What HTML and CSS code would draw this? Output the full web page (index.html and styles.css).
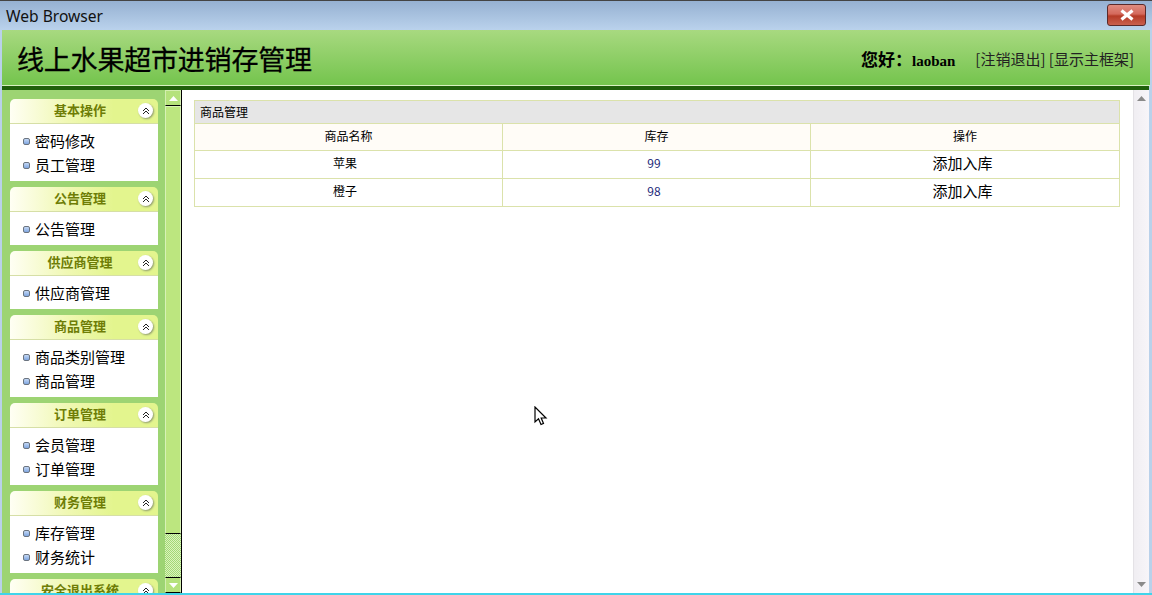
FILE: index.html
```html
<!DOCTYPE html>
<html lang="zh-CN">
<head>
    <meta charset="UTF-8">
    <meta name="viewport" content="width=device-width, initial-scale=1.0">
    <title>Web Browser</title>
    <link rel="stylesheet" href="styles.css">
</head>
<body>
    <div class="window">
        <div class="titlebar">
            <span class="titlebar-text">Web Browser</span>
            <div class="close-btn">
                <svg width="16" height="12" viewBox="0 0 16 12"><path d="M2.5 1.5 L13.5 10.5 M13.5 1.5 L2.5 10.5" stroke="#fff" stroke-width="3.2" fill="none"/></svg>
            </div>
        </div>

        <div class="top">
            <h1 class="site-title">线上水果超市进销存管理</h1>
            <div class="user-info">
                <b class="hello">您好：<span class="user-name">laoban</span></b>
                <span class="top-links"><a>[注销退出]</a> <a>[显示主框架]</a></span>
            </div>
        </div>

        <div class="main">
            <div class="sidebar">
                <div class="panel">
                    <div class="panel-head"><span>基本操作</span>
                        <i class="toggle"><svg width="8" height="8" viewBox="0 0 8 8"><path d="M1 4 L4 1 L7 4 M1 7 L4 4 L7 7" stroke="#222" fill="none"/></svg></i>
                    </div>
                    <ul class="panel-body">
                        <li>密码修改</li>
                        <li>员工管理</li>
                    </ul>
                </div>
                <div class="panel">
                    <div class="panel-head"><span>公告管理</span>
                        <i class="toggle"><svg width="8" height="8" viewBox="0 0 8 8"><path d="M1 4 L4 1 L7 4 M1 7 L4 4 L7 7" stroke="#222" fill="none"/></svg></i>
                    </div>
                    <ul class="panel-body">
                        <li>公告管理</li>
                    </ul>
                </div>
                <div class="panel">
                    <div class="panel-head"><span>供应商管理</span>
                        <i class="toggle"><svg width="8" height="8" viewBox="0 0 8 8"><path d="M1 4 L4 1 L7 4 M1 7 L4 4 L7 7" stroke="#222" fill="none"/></svg></i>
                    </div>
                    <ul class="panel-body">
                        <li>供应商管理</li>
                    </ul>
                </div>
                <div class="panel">
                    <div class="panel-head"><span>商品管理</span>
                        <i class="toggle"><svg width="8" height="8" viewBox="0 0 8 8"><path d="M1 4 L4 1 L7 4 M1 7 L4 4 L7 7" stroke="#222" fill="none"/></svg></i>
                    </div>
                    <ul class="panel-body">
                        <li>商品类别管理</li>
                        <li>商品管理</li>
                    </ul>
                </div>
                <div class="panel">
                    <div class="panel-head"><span>订单管理</span>
                        <i class="toggle"><svg width="8" height="8" viewBox="0 0 8 8"><path d="M1 4 L4 1 L7 4 M1 7 L4 4 L7 7" stroke="#222" fill="none"/></svg></i>
                    </div>
                    <ul class="panel-body">
                        <li>会员管理</li>
                        <li>订单管理</li>
                    </ul>
                </div>
                <div class="panel">
                    <div class="panel-head"><span>财务管理</span>
                        <i class="toggle"><svg width="8" height="8" viewBox="0 0 8 8"><path d="M1 4 L4 1 L7 4 M1 7 L4 4 L7 7" stroke="#222" fill="none"/></svg></i>
                    </div>
                    <ul class="panel-body">
                        <li>库存管理</li>
                        <li>财务统计</li>
                    </ul>
                </div>
                <div class="panel">
                    <div class="panel-head"><span>安全退出系统</span>
                        <i class="toggle"><svg width="8" height="8" viewBox="0 0 8 8"><path d="M1 4 L4 1 L7 4 M1 7 L4 4 L7 7" stroke="#222" fill="none"/></svg></i>
                    </div>
                </div>
            </div>

            <div class="side-scroll">
                <div class="side-btn"><svg width="9" height="5" viewBox="0 0 9 5"><path d="M4.5 0 L9 5 L0 5 Z" fill="#fff"/></svg></div>
                <div class="side-thumb"></div>
                <svg class="side-track" shape-rendering="crispEdges">
                    <defs>
                        <pattern id="dither" width="2" height="2" patternUnits="userSpaceOnUse">
                            <rect width="2" height="2" fill="#a2d877"/>
                            <rect width="1" height="1" fill="#dcf4bd"/>
                            <rect x="1" y="1" width="1" height="1" fill="#dcf4bd"/>
                        </pattern>
                    </defs>
                    <rect width="100%" height="100%" fill="url(#dither)"/>
                </svg>
                <div class="side-btn side-btn-down"><svg width="9" height="5" viewBox="0 0 9 5"><path d="M0 0 L9 0 L4.5 5 Z" fill="#fff"/></svg></div>
            </div>

            <div class="content">
                <table class="goods">
                    <colgroup>
                        <col class="col-name">
                        <col class="col-stock">
                        <col class="col-action">
                    </colgroup>
                    <tr class="goods-title"><td colspan="3">商品管理</td></tr>
                    <tr class="goods-head">
                        <td>商品名称</td>
                        <td>库存</td>
                        <td>操作</td>
                    </tr>
                    <tr>
                        <td class="name">苹果</td>
                        <td class="num">99</td>
                        <td class="action">添加入库</td>
                    </tr>
                    <tr>
                        <td class="name">橙子</td>
                        <td class="num">98</td>
                        <td class="action">添加入库</td>
                    </tr>
                </table>
            </div>

            <div class="main-scroll">
                <svg width="9" height="5" viewBox="0 0 9 5"><path d="M4.5 0 L9 5 L0 5 Z" fill="#8a8a8a"/></svg>
                <svg width="9" height="5" viewBox="0 0 9 5"><path d="M0 0 L9 0 L4.5 5 Z" fill="#8a8a8a"/></svg>
            </div>
        </div>

        <svg class="pointer" width="14" height="21" viewBox="0 0 14 21"><path d="M1 1 L1 16 L4.5 12.8 L7 18.5 L9.5 17.4 L7.2 12 L12 12 Z" fill="#fff" stroke="#000" stroke-width="1.2"/></svg>
    </div>
</body>
</html>
```

FILE: styles.css
```css
html, body {
    margin: 0;
    padding: 0;
    height: 100%;
    overflow: hidden;
}
body {
    background: #fff;
    font-family: "Noto Sans CJK SC", "Liberation Sans", sans-serif;
    color: #000;
}
.window {
    position: relative;
    box-sizing: border-box;
    width: 1152px;
    height: 595px;
    display: flex;
    flex-direction: column;
    padding: 0 2px 0 2px;
    background: #b9d1ea;
    border-top: 1px solid #444;
    border-bottom: 2px solid #3fd4ea;
    overflow: hidden;
}

/* window title bar */
.titlebar {
    height: 29px;
    flex: none;
    margin: 0 -2px;
    padding: 0 6px 0 6px;
    display: flex;
    justify-content: space-between;
    align-items: center;
    background: linear-gradient(#96b1d2, #bad2ec);
}
.titlebar-text {
    font-family: "Noto Sans", sans-serif;
    font-size: 15.6px;
    color: #111;
}
.close-btn {
    width: 39px;
    height: 22px;
    margin-top: -1px;
    box-sizing: border-box;
    display: flex;
    align-items: center;
    justify-content: center;
    border: 1px solid #5b2a2a;
    border-radius: 3px;
    background: linear-gradient(#df8d80 0%, #d4695c 45%, #b53b27 55%, #c9604e 100%);
}

/* green header */
.top {
    height: 56px;
    flex: none;
    box-sizing: border-box;
    display: flex;
    justify-content: space-between;
    align-items: center;
    padding: 2px 16px 0 15px;
    background: linear-gradient(#a8d980, #74c44d);
    border-bottom: 1px solid #d6efc0;
}
.site-title {
    margin: 0;
    font-size: 27px;
    font-weight: 400;
    letter-spacing: -0.2px;
    line-height: 52px;
    -webkit-text-stroke: 0.3px #000;
}
.user-info {
    display: flex;
    align-items: center;
    gap: 20px;
}
.hello {
    font-size: 17px;
}
.user-name {
    font-family: "Liberation Serif", serif;
    font-size: 15px;
}
.top-links {
    font-size: 15px;
    color: #222;
}

.main {
    flex: 1;
    min-height: 0;
    display: flex;
    border-top: 4px solid #1f5f0b;
    margin-right: 1px;
}

/* left menu */
.sidebar {
    width: 163px;
    flex: none;
    box-sizing: border-box;
    padding: 9px 7px 0 8px;
    background: #9dd473;
    overflow: hidden;
}
.panel {
    margin-bottom: 6px;
}
.panel-head {
    position: relative;
    height: 25px;
    box-sizing: border-box;
    padding-right: 8px;
    text-align: center;
    font-size: 13px;
    font-weight: 700;
    line-height: 21px;
    color: #6e7d06;
    background: linear-gradient(90deg, #fffff4 0%, #f0f8b4 38%, #e3f58e 70%, #e3f58e 100%);
    border-bottom: 1px solid #d6dfa6;
    border-radius: 5px 5px 0 0;
}
.toggle {
    position: absolute;
    right: 5px;
    top: 4px;
    width: 15px;
    height: 15px;
    display: flex;
    align-items: center;
    justify-content: center;
    border-radius: 50%;
    background: #fff;
    box-shadow: 1px 1px 2px #8f9a70;
}
.panel-body {
    margin: 0;
    padding: 5px 0 4px 0;
    list-style: none;
    background: #fff;
}
.panel-body li {
    height: 24px;
    line-height: 24px;
    font-size: 15px;
    padding-left: 25px;
    position: relative;
}
.panel-body li::before {
    content: "";
    position: absolute;
    left: 13px;
    top: 9px;
    width: 5px;
    height: 5px;
    border: 1px solid #6b7480;
    border-radius: 2px;
    background: linear-gradient(#c4d8f5, #7fa6e0);
}

/* green scrollbar of the menu */
.side-scroll {
    width: 17px;
    flex: none;
    display: flex;
    flex-direction: column;
    background: #9dd473;
    border-right: 1px solid #000;
    box-sizing: border-box;
}
.side-btn {
    height: 16px;
    flex: none;
    box-sizing: border-box;
    display: flex;
    align-items: center;
    justify-content: center;
    background: #b5e27c;
    border: 1px solid #d4efb0;
    border-bottom-color: #000;
}
.side-btn-down {
    border-top-color: #000;
    border-bottom-color: #000;
    height: 16px;
}
.side-thumb {
    flex: none;
    height: 428px;
    box-sizing: border-box;
    background: #bce67f;
    border: 1px solid #d8f2b6;
    border-bottom: 1px solid #000;
}
.side-track {
    flex: 1;
    min-height: 0;
    width: 100%;
    display: block;
}

/* goods table */
.content {
    flex: 1;
    min-width: 0;
    box-sizing: border-box;
    padding: 10px 13px 0 12px;
    background: #fff;
}
.goods {
    width: 926px;
    border-collapse: collapse;
    table-layout: fixed;
    font-size: 12px;
}
.col-name,
.col-stock {
    width: 308px;
}
.col-action {
    width: 309px;
}
.goods td {
    border: 1px solid #dbe2ab;
    text-align: center;
    height: 28px;
    padding: 0 0 4px 0;
    box-sizing: border-box;
}
.goods-title td {
    height: 23px;
    text-align: left;
    padding: 0 0 2px 5px;
    background: #e6e6e6;
}
.goods .goods-head td {
    height: 27px;
    padding-bottom: 4px;
    background: #fffcf7;
}
.goods .name {
    padding-right: 7px;
}
.goods .num {
    color: #1d2a7a;
    padding-right: 5px;
}
.goods .action {
    font-size: 15px;
    padding-right: 5px;
}

/* page scrollbar */
.main-scroll {
    width: 16px;
    flex: none;
    box-sizing: border-box;
    padding: 6px 0 6px 0;
    display: flex;
    flex-direction: column;
    justify-content: space-between;
    align-items: center;
    background: linear-gradient(90deg, #f0eef2, #f7f5f9);
    border-left: 1px solid #e4e2e6;
}

.pointer {
    position: absolute;
    left: 534px;
    top: 405px;
}
```
